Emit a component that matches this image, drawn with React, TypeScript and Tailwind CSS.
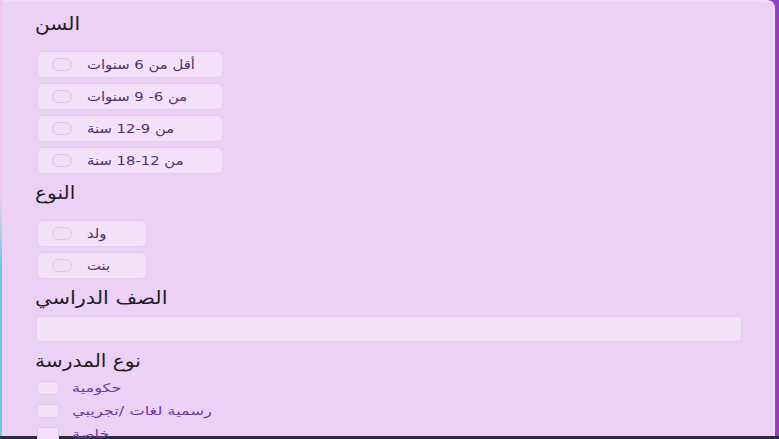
export default function App() {
  const ages = ["أقل من 6 سنوات", "من 6- 9 سنوات", "من 9-12 سنة", "من 12-18 سنة"];
  const genders = ["ولد", "بنت"];
  const schools = ["حكومية", "رسمية لغات /تجريبي", "خاصة"];

  return (
    <div
      className="h-[439px] w-[779px] flex flex-col bg-[#2b2a3f] overflow-hidden"
      style={{ fontFamily: '"DejaVu Sans", sans-serif' }}
    >
      <div className="flex flex-1 min-h-0 bg-[#9440bb]">
        <div className="w-[2px] bg-gradient-to-b from-[#f5c6ea] from-45% to-[#5ccfe6] to-60%" />
        <div className="flex-1 mr-[4px] bg-[#ecd0f6] border-t-2 border-r-2 border-[#f3dcf8] rounded-tr-[8px] pl-[33px] pt-[10px]">
          <h2 className="text-[18px] leading-[24px] text-[#1e1e1e]">
            <span className="inline-block origin-left scale-x-[1.12]">السن</span>
          </h2>
          <div className="mt-[15px] flex flex-col gap-[5px]">
            {ages.map((a) => (
              <label
                key={a}
                className="ml-[2px] w-[186px] h-[27px] flex items-center gap-[15px] pl-[14px] bg-[#f3e1fa] border border-[#e6caf0] rounded-[6px]"
              >
                <span className="w-[20px] h-[13px] rounded-full border border-[#dcc2e8] bg-[#f1dff8]" />
                <span className="inline-block origin-left scale-x-[1.14] text-[13px] text-[#53306f]">{a}</span>
              </label>
            ))}
          </div>

          <h2 className="mt-[7px] text-[18px] leading-[24px] text-[#1e1e1e]">
            <span className="inline-block origin-left scale-x-[1.12]">النوع</span>
          </h2>
          <div className="mt-[15px] flex flex-col gap-[5px]">
            {genders.map((g) => (
              <label
                key={g}
                className="ml-[2px] w-[110px] h-[27px] flex items-center gap-[15px] pl-[14px] bg-[#f3e1fa] border border-[#e6caf0] rounded-[6px]"
              >
                <span className="w-[20px] h-[13px] rounded-full border border-[#dcc2e8] bg-[#f1dff8]" />
                <span className="inline-block origin-left scale-x-[1.14] text-[13px] text-[#53306f]">{g}</span>
              </label>
            ))}
          </div>

          <h2 className="mt-[7px] text-[18px] leading-[24px] text-[#1e1e1e]">
            <span className="inline-block origin-left scale-x-[1.16]">الصف الدراسي</span>
          </h2>
          <div className="mt-[6px] ml-[1px] w-[706px] h-[26px] bg-[#f3e1fa] border border-[#e6caf0] rounded-[3px]" />

          <h2 className="mt-[7px] text-[18px] leading-[24px] text-[#1e1e1e]">
            <span className="inline-block origin-left scale-x-[1.12]">نوع المدرسة</span>
          </h2>
          <div className="mt-[8px] flex flex-col gap-[9px]">
            {schools.map((s) => (
              <label key={s} className="ml-[2px] flex items-center gap-[13px]">
                <span className="w-[22px] h-[14px] rounded-[3px] border border-[#e3c6ee] bg-[#f3e1fa]" />
                <span className="inline-block origin-left scale-x-[1.35] text-[12px] leading-[14px] text-[#6e3a9a]">{s}</span>
              </label>
            ))}
          </div>
        </div>
      </div>
      <div className="h-[3px] shrink-0" />
    </div>
  );
}
